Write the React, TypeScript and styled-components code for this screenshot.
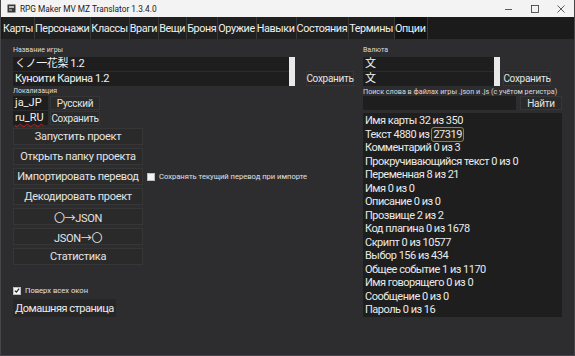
import styled, { createGlobalStyle } from 'styled-components';

const FONT = `Roboto, "Noto Sans", "Noto Sans CJK JP", sans-serif`;

const Global = createGlobalStyle`
  html, body {
    margin: 0;
    padding: 0;
    background: #2d2d30;
  }
  * {
    box-sizing: border-box;
  }
`;

const Window = styled.div`
  width: 575px;
  height: 356px;
  display: flex;
  flex-direction: column;
  background: #2d2d30;
  border: 1px solid #45454a;
  border-top: none;
  font-family: ${FONT};
  color: #e6e6e6;
  overflow: hidden;
`;

const TitleBar = styled.div`
  height: 17px;
  flex: none;
  display: flex;
  align-items: center;
  background: #f3f3f3;
  color: #1a1a1a;
  font-size: 8.3px;
  padding-left: 6px;

  > .title {
    margin-left: 4px;
    flex: 1;
  }
`;

const Controls = styled.div`
  display: flex;
  align-items: center;
  height: 100%;

  > svg {
    width: 26px;
    height: 10px;
  }
`;

const MenuBar = styled.div`
  height: 22px;
  flex: none;
  display: flex;
  background: #1b1b1b;
  padding-left: 2px;
`;

const Tab = styled.div<{ $active?: boolean }>`
  display: flex;
  align-items: center;
  padding: 0 1px 0 0;
  font-size: 10.8px;
  color: #f0f0f0;
  background: ${(p) => (p.$active ? '#131313' : '#202020')};
  border-right: 1px solid #383838;
  letter-spacing: -0.4px;
`;

const Body = styled.div`
  flex: 1;
  display: flex;
  padding: 7px 0 0 12px;
`;

const LeftColumn = styled.div`
  width: 350px;
  display: flex;
  flex-direction: column;
`;

const RightColumn = styled.div`
  width: 199px;
  display: flex;
  flex-direction: column;
`;

const Label = styled.div<{ $size?: number }>`
  font-size: ${(p) => p.$size ?? 7}px;
  line-height: 9px;
  height: 9px;
  color: #dcdcdc;
  white-space: nowrap;
`;

const EditRow = styled.div`
  display: flex;
  align-items: flex-end;
  margin-top: 2px;
`;

const TextArea = styled.div<{ $width: number }>`
  width: ${(p) => p.$width}px;
  height: 29px;
  display: flex;
  flex-direction: column;
  background: #1e1e1e;
`;

const TextLine = styled.div`
  height: 14px;
  line-height: 14px;
  font-size: 11px;
  letter-spacing: -0.4px;
  padding-left: 2px;
  color: #f0f0f0;
  white-space: nowrap;
  & + & {
    border-top: 1px solid #2c2c2c;
    height: 15px;
  }
`;

const Scrollbar = styled.div`
  width: 6px;
  height: 29px;
  background: #e9e9e9;
`;

const Spacer = styled.div<{ $width: number }>`
  width: ${(p) => p.$width}px;
  flex: none;
`;

const Button = styled.div<{ $width?: number; $height?: number; $size?: number }>`
  width: ${(p) => (p.$width ? `${p.$width}px` : 'auto')};
  height: ${(p) => p.$height ?? 15}px;
  display: flex;
  align-items: center;
  justify-content: center;
  background: #2a2a2a;
  border: 1px solid #363636;
  font-size: ${(p) => p.$size ?? 10}px;
  letter-spacing: -0.3px;
  color: #e4e4e4;
  white-space: nowrap;
  flex: none;
`;

const LocaleGrid = styled.div`
  display: grid;
  grid-template-columns: 35px 50px;
  grid-auto-rows: 14px;
  gap: 1px 2px;
`;

const Field = styled.div<{ $misspelled?: boolean }>`
  background: #1e1e1e;
  font-size: 11px;
  line-height: 14px;
  padding-left: 2px;
  color: #f0f0f0;
  text-decoration: ${(p) => (p.$misspelled ? 'underline wavy #b02020 1px' : 'none')};
  text-underline-offset: 2px;
  text-decoration-skip-ink: none;
`;

const ActionStack = styled.div`
  display: flex;
  flex-direction: column;
  gap: 3px;
  margin-top: 3px;
`;

const ActionRow = styled.div`
  display: flex;
  align-items: center;
  gap: 4px;
`;

const CheckRow = styled.label`
  display: flex;
  align-items: center;
  gap: 4px;
  font-size: 7.6px;
  color: #e0e0e0;
  white-space: nowrap;
`;

const Box = styled.span`
  width: 8px;
  height: 8px;
  background: #f4f4f4;
  border: 1px solid #bdbdbd;
  display: inline-flex;
  align-items: center;
  justify-content: center;

  > svg {
    width: 7px;
    height: 7px;
  }
`;

const Footer = styled.div`
  margin-top: 21px;
  display: flex;
  flex-direction: column;
  gap: 4px;
`;

const HomeButton = styled.div`
  align-self: flex-start;
  height: 18px;
  padding: 0 2px;
  display: flex;
  align-items: center;
  background: #262626;
  font-size: 11px;
  letter-spacing: -0.5px;
  color: #ececec;
`;

const SearchRow = styled.div`
  display: flex;
  gap: 4px;
`;

const SearchInput = styled.div`
  width: 153px;
  height: 14px;
  background: #1e1e1e;
`;

const StatsBox = styled.div`
  margin-top: 3px;
  height: 204px;
  background: #1e1e1e;
  padding: 1px 0 0 2px;
  font-size: 11px;
  line-height: 13.5px;
  letter-spacing: -0.5px;
  color: #eaeaea;
`;

const StatLine = styled.div`
  white-space: nowrap;
  height: 13.5px;
`;

const Highlight = styled.span`
  border: 1px solid #8c8040;
  border-radius: 3px;
  padding: 0 1px;
  margin-left: 2px;
  background: #262419;
`;

const tabs = [
  'Карты',
  'Персонажи',
  'Классы',
  'Враги',
  'Вещи',
  'Броня',
  'Оружие',
  'Навыки',
  'Состояния',
  'Термины',
  'Опции',
];

const stats = [
  'Имя карты 32 из 350',
  'Текст 4880 из 27319',
  'Комментарий 0 из 3',
  'Прокручивающийся текст 0 из 0',
  'Переменная 8 из 21',
  'Имя 0 из 0',
  'Описание 0 из 0',
  'Прозвище 2 из 2',
  'Код плагина 0 из 1678',
  'Скрипт 0 из 10577',
  'Выбор 156 из 434',
  'Общее событие 1 из 1170',
  'Имя говорящего 0 из 0',
  'Сообщение 0 из 0',
  'Пароль 0 из 16',
];

const actions = [
  'Запустить проект',
  'Открыть папку проекта',
  'Импортировать перевод',
  'Декодировать проект',
  '〇→JSON',
  'JSON→〇',
  'Статистика',
];

function AppIcon() {
  return (
    <svg width="9" height="9" viewBox="0 0 9 9">
      <rect x="0.5" y="0.5" width="8" height="8" fill="#3a3a3a" />
      <rect x="2" y="2" width="5" height="2" fill="#bbb" />
      <rect x="2" y="5" width="3" height="2" fill="#888" />
    </svg>
  );
}

function Check() {
  return (
    <svg viewBox="0 0 7 7">
      <path d="M1 3.6 L2.8 5.4 L6 1.4" stroke="#222" strokeWidth="1.4" fill="none" />
    </svg>
  );
}

function App() {
  return (
    <>
      <Global />
      <Window>
        <TitleBar>
          <AppIcon />
          <span className="title">RPG Maker MV MZ Translator 1.3.4.0</span>
          <Controls>
            <svg viewBox="0 0 26 10">
              <line x1="9" y1="5.5" x2="16" y2="5.5" stroke="#333" strokeWidth="0.8" />
            </svg>
            <svg viewBox="0 0 26 10">
              <rect x="9.5" y="1.5" width="7" height="7" stroke="#333" strokeWidth="0.8" fill="none" />
            </svg>
            <svg viewBox="0 0 26 10">
              <path d="M9.5 1.5 L16.5 8.5 M16.5 1.5 L9.5 8.5" stroke="#333" strokeWidth="0.8" />
            </svg>
          </Controls>
        </TitleBar>
        <MenuBar>
          {tabs.map((t) => (
            <Tab key={t} $active={t === 'Опции'}>
              {t}
            </Tab>
          ))}
        </MenuBar>
        <Body>
          <LeftColumn>
            <Label>Название игры</Label>
            <EditRow>
              <TextArea $width={276}>
                <TextLine>くノ一花梨 1.2</TextLine>
                <TextLine>Куноити Карина 1.2</TextLine>
              </TextArea>
              <Scrollbar />
              <Spacer $width={11} />
              <Button $width={48}>Сохранить</Button>
            </EditRow>
            <Label style={{ marginTop: 1 }}>Локализация</Label>
            <LocaleGrid>
              <Field>ja_JP</Field>
              <Button $height={14}>Русский</Button>
              <Field $misspelled>ru_RU</Field>
              <Button $height={14}>Сохранить</Button>
            </LocaleGrid>
            <ActionStack>
              {actions.map((a) =>
                a === 'Импортировать перевод' ? (
                  <ActionRow key={a}>
                    <Button $width={130} $height={17} $size={11}>
                      {a}
                    </Button>
                    <CheckRow>
                      <Box />
                      Сохранять текущий перевод при импорте
                    </CheckRow>
                  </ActionRow>
                ) : (
                  <Button key={a} $width={130} $height={17} $size={11}>
                    {a}
                  </Button>
                ),
              )}
            </ActionStack>
            <Footer>
              <CheckRow>
                <Box>
                  <Check />
                </Box>
                Поверх всех окон
              </CheckRow>
              <HomeButton>Домашняя страница</HomeButton>
            </Footer>
          </LeftColumn>
          <RightColumn>
            <Label>Валюта</Label>
            <EditRow>
              <TextArea $width={131}>
                <TextLine>文</TextLine>
                <TextLine>文</TextLine>
              </TextArea>
              <Scrollbar />
              <Spacer $width={3} />
              <Button $width={48}>Сохранить</Button>
            </EditRow>
            <Label $size={7.2} style={{ marginTop: 1 }}>
              Поиск слова в файлах игры .json и .js (с учётом регистра)
            </Label>
            <SearchRow>
              <SearchInput />
              <Button $width={42} $height={14}>
                Найти
              </Button>
            </SearchRow>
            <StatsBox>
              {stats.map((s) =>
                s.startsWith('Текст 4880') ? (
                  <StatLine key={s}>
                    Текст 4880 из<Highlight>27319</Highlight>
                  </StatLine>
                ) : (
                  <StatLine key={s}>{s}</StatLine>
                ),
              )}
            </StatsBox>
          </RightColumn>
        </Body>
      </Window>
    </>
  );
}

export default App;
